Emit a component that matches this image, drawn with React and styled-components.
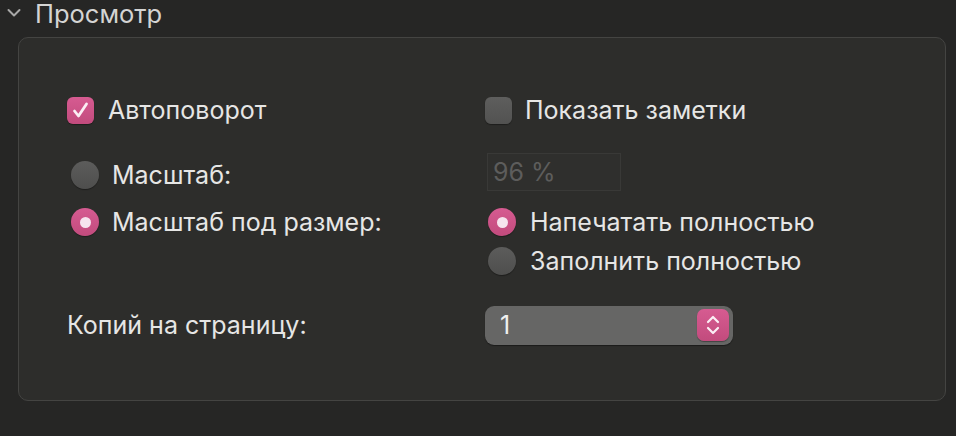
import React from "react";
import styled, { createGlobalStyle } from "styled-components";

const GlobalStyle = createGlobalStyle`
  html, body {
    margin: 0;
    padding: 0;
    background: #262625;
  }
  body {
    font-family: Inter, "Liberation Sans", Arial, sans-serif;
    -webkit-font-smoothing: antialiased;
  }
`;

const Page = styled.div`
  width: 956px;
  height: 436px;
  background: #262625;
  overflow: hidden;
`;

const Header = styled.div`
  display: flex;
  align-items: center;
  gap: 14px;
  height: 26px;
  padding-left: 7px;
  color: #d4d4d3;
  font-size: 25.5px;
`;

const Panel = styled.div`
  margin: 11px 10px 0 18px;
  height: 364px;
  box-sizing: border-box;
  background: #2d2d2b;
  border: 1.5px solid #444442;
  border-radius: 10px;
  padding: 56px 0 0 48px;
`;

const Grid = styled.div`
  display: grid;
  grid-template-columns: 418px 1fr;
  grid-template-rows: 32px 27px 44px 50px 28px 30px 40px;
  align-items: center;
`;

const Cell = styled.div`
  display: flex;
  align-items: center;
  gap: ${(p) => p.$gap || 14}px;
  padding-left: ${(p) => p.$indent || 0}px;
  color: #e6e6e5;
  font-size: 25px;
  white-space: nowrap;
  grid-row: ${(p) => p.$row};
  grid-column: ${(p) => p.$col};
  align-self: ${(p) => p.$align || "center"};
`;

const Box = styled.span`
  width: 27px;
  height: 27px;
  border-radius: 6px;
  box-sizing: border-box;
  display: flex;
  align-items: center;
  justify-content: center;
  background: ${(p) =>
    p.$on ? "linear-gradient(#d65b91, #c24b7d)" : "linear-gradient(#5e5e5d, #525251)"};
  box-shadow: 0 1px 1px rgba(0, 0, 0, 0.35);
`;

const Radio = styled.span`
  width: 28px;
  height: 28px;
  border-radius: 50%;
  display: flex;
  align-items: center;
  justify-content: center;
  flex-shrink: 0;
  background: ${(p) =>
    p.$on ? "linear-gradient(#d65b91, #c24b7d)" : "linear-gradient(#5c5c5b, #4e4e4d)"};
  box-shadow: 0 1px 1px rgba(0, 0, 0, 0.35);
  &::after {
    content: "";
    display: ${(p) => (p.$on ? "block" : "none")};
    width: 11px;
    height: 11px;
    border-radius: 50%;
    background: #f6e4ee;
  }
`;

const PercentInput = styled.div`
  width: 134px;
  height: 38px;
  box-sizing: border-box;
  margin-left: 2px;
  border: 1px solid #393937;
  background: #2f2f2d;
  color: #5d5d5c;
  font-size: 25px;
  display: flex;
  align-items: center;
  padding-left: 5px;
`;

const Stepper = styled.div`
  width: 248px;
  height: 39px;
  box-sizing: border-box;
  border-radius: 9px;
  background: #666665;
  box-shadow: 0 1px 1px rgba(0, 0, 0, 0.4);
  display: flex;
  align-items: center;
  justify-content: space-between;
  padding: 0 4px 0 15px;
  color: #f0f0ef;
  font-size: 25px;
`;

const StepButton = styled.span`
  width: 32px;
  height: 32px;
  border-radius: 7px;
  background: linear-gradient(#d65b91, #c24b7d);
  display: flex;
  align-items: center;
  justify-content: center;
  box-shadow: 0 1px 1px rgba(0, 0, 0, 0.35);
`;

const Chevron = () => (
  <svg width="14" height="10" viewBox="0 0 14 10">
    <path d="M1.5 2 L7 7.5 L12.5 2" fill="none" stroke="#a8a8a7" strokeWidth="2" strokeLinecap="round" strokeLinejoin="round" />
  </svg>
);

const Check = () => (
  <svg width="19" height="19" viewBox="0 0 19 19">
    <path d="M3.5 10 L7.5 15 L15.5 3" fill="none" stroke="#fbeef4" strokeWidth="2.8" strokeLinecap="round" strokeLinejoin="round" />
  </svg>
);

const Arrows = () => (
  <svg width="16" height="24" viewBox="0 0 16 24">
    <path d="M3 9 L8 4 L13 9 M3 15 L8 20 L13 15" fill="none" stroke="#fbeef4" strokeWidth="2.2" strokeLinecap="round" strokeLinejoin="round" />
  </svg>
);

export default function App() {
  return (
    <Page>
      <GlobalStyle />
      <Header>
        <Chevron />
        <span>Просмотр</span>
      </Header>
      <Panel>
        <Grid>
          <Cell $row={1} $col={1}>
            <Box $on>
              <Check />
            </Box>
            Автоповорот
          </Cell>
          <Cell $row={1} $col={2} $gap={13}>
            <Box />
            Показать заметки
          </Cell>

          <Cell $row={3} $col={1} $indent={4} $gap={13}>
            <Radio />
            Масштаб:
          </Cell>
          <Cell $row={3} $col={2} $align="start">
            <PercentInput>96 %</PercentInput>
          </Cell>

          <Cell $row={4} $col={1} $indent={4} $gap={13}>
            <Radio $on />
            Масштаб под размер:
          </Cell>
          <Cell $row={4} $col={2} $indent={3} $gap={14}>
            <Radio $on />
            Напечатать полностью
          </Cell>

          <Cell $row={5} $col={2} $indent={3} $gap={14}>
            <Radio />
            Заполнить полностью
          </Cell>

          <Cell $row={7} $col={1}>Копий на страницу:</Cell>
          <Cell $row={7} $col={2}>
            <Stepper>
              1
              <StepButton>
                <Arrows />
              </StepButton>
            </Stepper>
          </Cell>
        </Grid>
      </Panel>
    </Page>
  );
}
